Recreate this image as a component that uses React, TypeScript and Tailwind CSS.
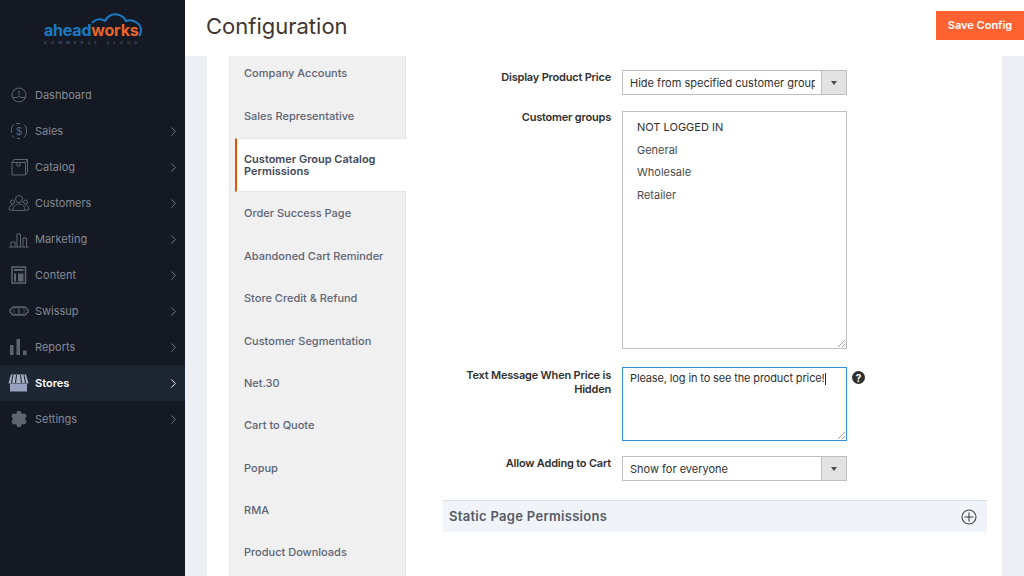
import { ChevronRight, Settings } from 'lucide-react'
import type { ReactNode } from 'react'

const font = 'font-["Inter","Liberation_Sans",sans-serif]'

function Svg({ children, w = 20 }: { children: ReactNode; w?: number }) {
  return (
    <svg width={w} height="18" viewBox={`0 0 ${w} 18`} fill="none" stroke="currentColor" strokeWidth="1">
      {children}
    </svg>
  )
}

const navItems: { label: string; icon: ReactNode; arrow?: boolean; active?: boolean }[] = [
  {
    label: 'Dashboard',
    icon: (
      <Svg>
        <circle cx="10" cy="9" r="7" />
        <path d="M3.500 11.500h4.500l1.500-1h1l1.500 1h4.500M10 4.500v5" />
      </Svg>
    ),
  },
  {
    label: 'Sales',
    arrow: true,
    icon: (
      <Svg>
        <path d="M5 2.500C2.500 4 2 8 2.500 11M5 15.500c-1-.5-1.500-1-2-2M15 2.500c2 1.500 2.500 4 2.500 6.500s-.5 4-2.500 6.500M7 1.800c1-.3 3-.5 4 0M8 16.500h3" />
        <text x="10" y="13" textAnchor="middle" fontSize="11" fill="currentColor" stroke="none" fontFamily="Liberation Sans">$</text>
      </Svg>
    ),
  },
  {
    label: 'Catalog',
    arrow: true,
    icon: (
      <Svg>
        <path d="M3 4.500 5 1.500h13.500l-2 3H3zM3 4.500V17h13.500V4.500M16.500 17l2-2.500V1.500M8 4.500V8h3V4.500" />
      </Svg>
    ),
  },
  {
    label: 'Customers',
    arrow: true,
    icon: (
      <Svg w={22}>
        <circle cx="11" cy="5" r="3.500" />
        <circle cx="4.500" cy="8" r="2" />
        <circle cx="17.500" cy="8" r="2" />
        <path d="M1 15.500c0-3 2-4.500 4-4.500M21 15.500c0-3-2-4.500-4-4.500M5 16c0-3.500 2.500-6 6-6s6 2.500 6 6M1 15.500c2 1.500 18 1.500 20 0" />
      </Svg>
    ),
  },
  {
    label: 'Marketing',
    arrow: true,
    icon: (
      <Svg>
        <path d="M0 17h19.500M2 17v-5h4v5M8 17V4h3.500v13M14 17V8h3.500v9" />
      </Svg>
    ),
  },
  {
    label: 'Content',
    arrow: true,
    icon: (
      <Svg>
        <path d="M3 1h13.500v16H3z" strokeWidth="1.500" />
        <path d="M5 4h9.500" strokeWidth="2" />
        <path d="M5 7.500h2v8H5z M9 7.500h5.500v8H9z" fill="currentColor" stroke="none" />
      </Svg>
    ),
  },
  {
    label: 'Swissup',
    arrow: true,
    icon: (
      <Svg>
        <path d="M4 5h12l3 3v2l-3 3H4l-3-3V8z" strokeWidth="1.300" />
        <path d="M7 5.500c-3 .5-3 6.500 0 7M13 5.500c3 .5 3 6.500 0 7M8 5.500c2.500 1 2.500 6 0 7M12 5.500c-2.500 1-2.500 6 0 7" strokeWidth="0.700" />
      </Svg>
    ),
  },
  {
    label: 'Reports',
    arrow: true,
    icon: (
      <svg width="20" height="18" viewBox="0 0 20 18" fill="currentColor">
        <rect x="1" y="7" width="3.500" height="10" />
        <rect x="7.500" y="1" width="3.500" height="16" />
        <rect x="14" y="12.500" width="3.500" height="4.500" />
      </svg>
    ),
  },
  {
    label: 'Stores',
    arrow: true,
    active: true,
    icon: (
      <svg width="21" height="18" viewBox="0 0 21 18">
        <path d="M3 .5h15l2.500 9H.5z" fill="#aab2c8" />
        <path d="M5 1 3.500 9M8.500 1 7.500 9M12.500 1 13.500 9M16 1 17.500 9" stroke="#1e2533" strokeWidth="1.100" />
        <path d="M2 10h17v7.500H2z" fill="#98a2c0" />
      </svg>
    ),
  },
  { label: 'Settings', arrow: true, icon: <Settings size={18} fill="currentColor" strokeWidth={2} /> },
]

const tabs = [
  'Company Accounts',
  'Sales Representative',
  'Customer Group Catalog Permissions',
  'Order Success Page',
  'Abandoned Cart Reminder',
  'Store Credit & Refund',
  'Customer Segmentation',
  'Net.30',
  'Cart to Quote',
  'Popup',
  'RMA',
  'Product Downloads',
]

function Sidebar() {
  return (
    <aside className="w-[185px] shrink-0 bg-[#141923]">
      <div className="h-[77px] pl-[44px] pt-[12px]">
        <div className="relative w-[100px]">
          <svg className="absolute left-[47px] -top-[1px]" width="54" height="28" viewBox="0 0 54 28" fill="none" stroke="#1b79c4" strokeWidth="2">
            <path d="M1 12c3-4 9-5 13-2 3-6 9-8 14-6 4 1 6 4 7 6 5-2 14 1 15 8 0 3-1 6-2 7" />
          </svg>
          <div className="pt-[10px] text-[16px] font-bold leading-[16px] tracking-[-0.2px] whitespace-nowrap">
            <span className="text-[#1b79c4]">ahead</span>
            <span className="text-[#e9642a]">works</span>
          </div>
          <div className="mt-[3px] h-[3px] text-[4px] leading-[3px] tracking-[4.200px] text-[#6b7280] whitespace-nowrap">COMMERCE CLOUD</div>
        </div>
      </div>
      {navItems.map((item) => (
        <div
          key={item.label}
          className={`flex h-[36px] items-center pr-[4px] ${item.active ? 'bg-[#1e2533] text-white font-semibold' : 'text-[#858995]'}`}
        >
          <div className={`flex w-[35px] justify-center pl-[2px] ${item.active ? 'text-[#9aa3bf]' : 'text-[#5f6570]'}`}>{item.icon}</div>
          <span className="flex-1 text-[11px]">{item.label}</span>
          {item.arrow && <ChevronRight size={15} strokeWidth={1.500} className={item.active ? 'text-white' : 'text-[#7b808c]'} />}
        </div>
      ))}
    </aside>
  )
}

function TabList() {
  return (
    <div className="w-[177px] shrink-0 border-x border-[#e6e6e6] bg-[#f0f0f0]">
      {tabs.map((tab, i) =>
        i === 2 ? (
          <div
            key={tab}
            className="ml-[5px] -mr-px mt-[1px] flex h-[54px] items-center border-y border-[#e6e6e6] border-l-2 border-l-[#eb5202] bg-white pl-[7px] pr-2 text-[11px] font-semibold leading-[12.500px] text-[#41485a]"
          >
            {tab}
          </div>
        ) : (
          <div
            key={tab}
            className={`flex items-center pl-[14px] text-[11px] font-medium text-[#5d6475] ${i === 0 ? 'h-[39px] pb-[5px]' : 'h-[42.400px]'}`}
          >
            {tab}
          </div>
        ),
      )}
    </div>
  )
}

function Label({ children, className = '' }: { children: ReactNode; className?: string }) {
  return <div className={`w-[168px] shrink-0 text-right text-[11px] font-semibold leading-[14px] tracking-[-0.2px] text-[#303030] ${className}`}>{children}</div>
}

function SelectBox({ value }: { value: string }) {
  return (
    <div className="flex h-[25px] w-[225px] border border-[#bfbfbf] bg-white">
      <div className="mr-[6px] flex-1 overflow-hidden whitespace-nowrap pl-[7px] text-[11px] leading-[24px] text-[#303030]">{value}</div>
      <div className="flex w-[25px] shrink-0 items-center justify-center border-l border-[#bfbfbf] bg-[#e3e3e3]">
        <div className="h-0 w-0 border-x-[3px] border-t-[4px] border-x-transparent border-t-[#514943]" />
      </div>
    </div>
  )
}

function Grip() {
  return (
    <svg className="absolute bottom-[1px] right-[1px]" width="7" height="7" viewBox="0 0 7 7" stroke="#777" strokeWidth="0.700">
      <path d="M0 7 7 0M4 7l3-3" />
    </svg>
  )
}

function Form() {
  return (
    <div className="w-[544px] shrink-0 pt-[14px] text-[11px]">
      <div className="flex gap-[11px]">
        <Label>Display Product Price</Label>
        <SelectBox value="Hide from specified customer group" />
      </div>
      <div className="mt-[16px] flex gap-[11px]">
        <Label className="-mt-[1px]">Customer groups</Label>
        <div className="relative h-[238px] w-[225px] border border-[#bfbfbf] bg-white pl-[14px] pt-[4px] text-[11px] leading-[22.700px] text-[#4a4a4a]">
          <div className="text-[#303030]">NOT LOGGED IN</div>
          <div>General</div>
          <div>Wholesale</div>
          <div>Retailer</div>
          <Grip />
        </div>
      </div>
      <div className="mt-[18px] flex gap-[11px]">
        <Label className="pt-[1px] leading-[13.500px]">
          Text Message When Price is
          <br />
          Hidden
        </Label>
        <div className="relative h-[74px] w-[225px] border border-[#2f8fdd] bg-white pl-[7px] pt-[2px] text-[11px] tracking-[-0.13px] text-[#303030]">
          Please, log in to see the product price!
          <span className="inline-block h-[12px] w-px bg-[#303030] align-middle" />
          <Grip />
        </div>
        <div className="-ml-[6px] pt-[4px]">
          <div className="flex h-[13px] w-[13px] items-center justify-center rounded-full bg-[#303030] text-[10px] font-bold leading-none text-white">?</div>
        </div>
      </div>
      <div className="mt-[15px] flex gap-[11px]">
        <Label>Allow Adding to Cart</Label>
        <SelectBox value="Show for everyone" />
      </div>
      <div className="mt-[19px] flex h-[32px] items-center justify-between border-t border-[#d9dde3] bg-[#f0f3f8] pl-[6px] pr-[10px]">
        <span className="text-[13px] font-semibold tracking-[0.3px] text-[#555a66]">Static Page Permissions</span>
        <svg width="16" height="16" viewBox="0 0 16 16" fill="none" stroke="#444" strokeWidth="1.100">
          <circle cx="8" cy="8" r="7" />
          <path d="M8 3.500v9M3.500 8h9" />
        </svg>
      </div>
    </div>
  )
}

export default function App() {
  return (
    <div className={`flex h-[576px] w-[1024px] overflow-hidden bg-white ${font}`}>
      <Sidebar />
      <div className="flex min-w-0 flex-1 flex-col">
        <header className="flex h-[56px] shrink-0 justify-between pl-[21px] pt-[11px]">
          <h1 className="-mt-[1px] text-[22px] font-normal leading-[32px] text-[#41362f]">Configuration</h1>
          <button className="h-[29px] w-[88px] bg-[#ff6231] text-[11px] font-semibold text-white">Save Config</button>
        </header>
        <main className="flex min-h-0 flex-1 bg-[#eeeff4] px-[22px]">
          <div className="flex w-[795px] gap-[37px] bg-white pl-[22px]">
            <TabList />
            <Form />
          </div>
        </main>
      </div>
    </div>
  )
}
